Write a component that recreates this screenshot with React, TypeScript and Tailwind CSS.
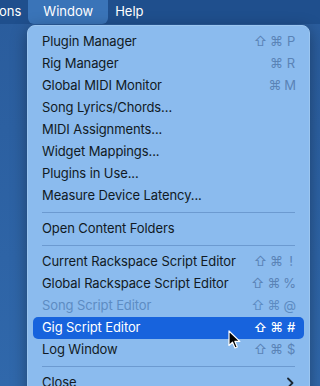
import React from "react";

type Item =
  | { kind: "item"; label: string; sc?: string[]; disabled?: boolean; active?: boolean; sub?: boolean }
  | { kind: "sep" };

const items: Item[] = [
  { kind: "item", label: "Plugin Manager", sc: ["⇧", "⌘", "P"] },
  { kind: "item", label: "Rig Manager", sc: ["⌘", "R"] },
  { kind: "item", label: "Global MIDI Monitor", sc: ["⌘", "M"] },
  { kind: "item", label: "Song Lyrics/Chords..." },
  { kind: "item", label: "MIDI Assignments..." },
  { kind: "item", label: "Widget Mappings..." },
  { kind: "item", label: "Plugins in Use..." },
  { kind: "item", label: "Measure Device Latency..." },
  { kind: "sep" },
  { kind: "item", label: "Open Content Folders" },
  { kind: "sep" },
  { kind: "item", label: "Current Rackspace Script Editor", sc: ["⇧", "⌘", "!"] },
  { kind: "item", label: "Global Rackspace Script Editor", sc: ["⇧", "⌘", "%"] },
  { kind: "item", label: "Song Script Editor", sc: ["⇧", "⌘", "@"], disabled: true },
  { kind: "item", label: "Gig Script Editor", sc: ["⇧", "⌘", "#"], active: true },
  { kind: "item", label: "Log Window", sc: ["⇧", "⌘", "$"] },
  { kind: "sep" },
  { kind: "item", label: "Close", sub: true },
];

export default function App() {
  return (
    <div
      className="relative w-[320px] h-[386px] overflow-hidden bg-gradient-to-b from-[#2a5c9c] to-[#3068ab]"
      style={{ fontFamily: "Inter, 'Noto Sans', sans-serif" }}
    >
      <div className="h-[24px] bg-[#1f4f8d] flex items-center text-white text-[13px]">
        <span className="-ml-[1px]">ons</span>
        <div className="ml-[7px] h-[24px] px-[15px] bg-[#3a74b8] rounded-b-[6px] flex items-center">Window</div>
        <span className="ml-[7px]">Help</span>
      </div>
      <div className="absolute left-[27px] top-[25px] w-[283px] h-[380px] bg-[#8bbbee] rounded-[8px] shadow-[0_4px_16px_rgba(0,0,0,0.35)] border border-[#9cc6f0] px-[5px] pt-[5px]">
        {items.map((it, i) =>
          it.kind === "sep" ? (
            <div key={i} className="h-[11px] pt-[5px] px-[9px]">
              <div className="h-px bg-[#6c9ad0]" />
            </div>
          ) : (
            <div
              key={i}
              className={
                "h-[22px] flex items-center justify-between pl-[9px] pr-[8px] rounded-[5px] text-[13px] tracking-[-0.1px] " +
                (it.active
                  ? "bg-[#1763dd] text-white"
                  : it.disabled
                  ? "text-[#5d8cc3]"
                  : "text-[#111a24]")
              }
            >
              <span>{it.label}</span>
              {it.sc && (
                <span
                  className={
                    "flex gap-[3px] " +
                    (it.active ? "text-white font-medium" : it.disabled ? "text-[#5d8cc3]" : "text-[#5a83b6]")
                  }
                >
                  {it.sc.map((s, j) => (
                    <span key={j} className="inline-block min-w-[10px] text-center">
                      {s}
                    </span>
                  ))}
                </span>
              )}
              {it.sub && (
                <svg width="8" height="12" viewBox="0 0 8 12" className="mr-[2px]">
                  <path d="M2 1.5 L6.5 6 L2 10.5" fill="none" stroke="#1b2733" strokeWidth="1.8" strokeLinecap="round" strokeLinejoin="round" />
                </svg>
              )}
            </div>
          )
        )}
      </div>
      <svg className="absolute left-[228px] top-[330px]" width="14" height="20" viewBox="0 0 14 20">
        <path d="M1 1 L1 15.5 L4.5 12.2 L7 18 L9.3 17 L6.9 11.4 L11.8 11.4 Z" fill="#000" stroke="#fff" strokeWidth="1.2" strokeLinejoin="round" />
      </svg>
    </div>
  );
}
